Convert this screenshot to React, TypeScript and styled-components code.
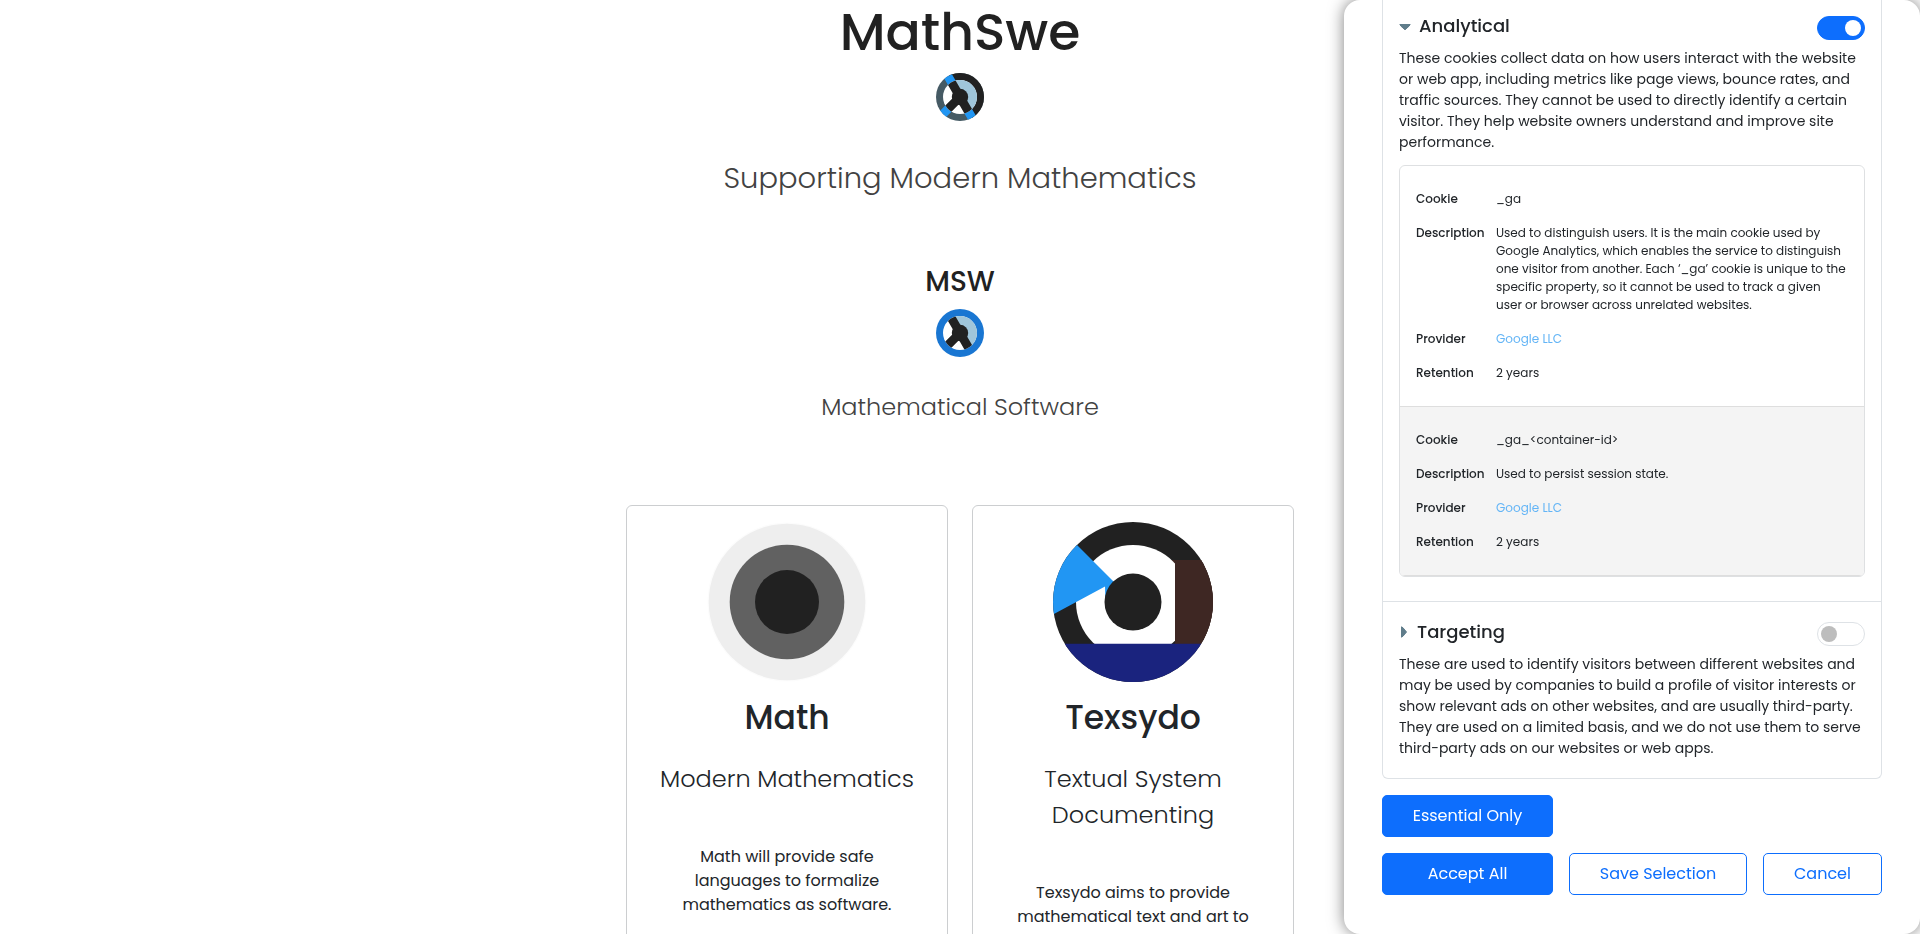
import React, { useId, useState } from "react";
import styled, { createGlobalStyle, css } from "styled-components";

const GlobalStyle = createGlobalStyle`
  *, *::before, *::after { box-sizing: border-box; }
  html, body { margin: 0; }
  body {
    overflow: hidden;
    background: #fff;
    color: #212529;
    font: 400 16px/24px Poppins, Inter, sans-serif;
  }
  h1, h2, h3, p { margin: 0; font-weight: 400; }
`;

const Page = styled.main`
  display: flex;
  flex-direction: column;
  align-items: center;
  height: 100vh;
  overflow: hidden;
  text-align: center;
`;

const Hero = styled.header<{ $small?: boolean }>`
  display: flex;
  flex-direction: column;
  align-items: center;
  color: #212121;
  margin-top: ${(p) => (p.$small ? 64 : 0)}px;

  svg { margin-top: 9px; }
`;

const HeroTitle = styled.h1<{ $small?: boolean }>`
  font-size: ${(p) => (p.$small ? 28 : 52)}px;
  line-height: ${(p) => (p.$small ? 36 : 64)}px;
  font-weight: 500;
`;

const HeroSubtitle = styled.h2<{ $small?: boolean }>`
  margin-top: ${(p) => (p.$small ? 32 : 35)}px;
  font-size: ${(p) => (p.$small ? 24 : 29)}px;
  line-height: ${(p) => (p.$small ? 36 : 44)}px;
  font-weight: 300;
  color: #424242;
`;

const Cards = styled.section`
  display: grid;
  grid-template-columns: 1fr 1fr;
  gap: 24px;
  width: 100%;
  max-width: 668px;
  margin-top: 80px;
  flex: 1 0 auto;
`;

const Card = styled.article`
  display: flex;
  flex-direction: column;
  align-items: center;
  min-height: 480px;
  padding: 16px;
  border: 1px solid #ccced0;
  border-radius: 6px;
`;

const CardTitle = styled.h2`
  margin-top: 16px;
  font-size: 33px;
  line-height: 39px;
  font-weight: 500;
`;

const CardSubtitle = styled.h3`
  margin-top: 24px;
  font-size: 24px;
  line-height: 36px;
  font-weight: 300;
  white-space: pre-line;
`;

const CardText = styled.p`
  margin-top: 48px;
  white-space: pre-line;
`;

const Drawer = styled.aside`
  position: fixed;
  inset: 0 0 0 auto;
  width: 30%;
  min-width: 576px;
  padding: 0 38px 39px;
  overflow: hidden;
  background: #fff;
  border-radius: 16px;
  box-shadow: 0 0 16px rgba(0, 0, 0, 0.5);
`;

const Categories = styled.div`
  border: 1px solid #dee2e6;
  border-top: 0;
  border-radius: 0 0 6px 6px;
`;

const Category = styled.section`
  padding: 16px 16px 19px;

  & + & {
    padding-top: 20px;
    border-top: 1px solid #dee2e6;
  }
`;

const CategoryHead = styled.div`
  display: flex;
  justify-content: space-between;
  align-items: flex-start;
  height: 32px;
`;

const Disclosure = styled.button`
  display: flex;
  align-items: center;
  gap: 8px;
  padding: 0;
  border: 0;
  background: none;
  color: inherit;
  font: 500 18px/20px Poppins, Inter, sans-serif;
  cursor: pointer;
`;

const Switch = styled.input`
  appearance: none;
  flex: none;
  display: flex;
  align-items: center;
  width: 48px;
  height: 24px;
  margin: 0;
  padding: 0 3px;
  border: 1px solid #dee2e6;
  border-radius: 12px;
  background: #fff;
  cursor: pointer;

  &::before {
    content: "";
    width: 16px;
    height: 16px;
    border-radius: 50%;
    background: #bdbdbd;
  }

  &:checked {
    justify-content: flex-end;
    border-color: #0d6efd;
    background: #0d6efd;
  }
  &:checked::before { background: #fff; }
`;

const CategoryText = styled.p`
  font-size: 14px;
  line-height: 21px;
  white-space: pre-line;
`;

const CookieList = styled.div`
  margin: 12px 0 5px;
  border: 1px solid #dee0e2;
  border-radius: 6px;
  overflow: hidden;
`;

const Cookie = styled.div`
  padding: 16px;
  border-bottom: 1px solid #dedede;

  &:nth-child(even) { background: #f4f4f4; }
`;

const CookieTable = styled.table`
  width: 100%;
  border-collapse: collapse;
  font-size: 12px;
  line-height: 18px;
  text-align: left;

  th, td {
    padding: 8px 0;
    vertical-align: top;
    white-space: pre-line;
  }
  th { width: 80px; font-weight: 500; }
  a { color: #64b5f6; text-decoration: none; }
`;

const Actions = styled.div`
  display: grid;
  grid-template-columns: 171fr 178fr 119fr;
  gap: 16px;
  margin-top: 16px;
`;

const Button = styled.button<{ $solid?: boolean; $first?: boolean }>`
  height: 42px;
  padding: 0;
  border: 1px solid #0d6efd;
  border-radius: 5px;
  background: #fff;
  color: #0d6efd;
  font: 400 16px/24px Poppins, Inter, sans-serif;
  cursor: pointer;

  ${(p) => p.$solid && css`background: #0d6efd; color: #fff;`}
  ${(p) => p.$first && css`grid-column: 1;`}
`;

function WheelLogo({ solidRing = false }: { solidRing?: boolean }) {
  const id = useId();
  const spokes = "M24 24 9 -2M24 24 -1 49M24 24 39 50";
  return (
    <svg width="48" height="48" viewBox="0 0 48 48" aria-hidden="true">
      <clipPath id={`${id}o`}><circle cx="24" cy="24" r="24" /></clipPath>
      <clipPath id={`${id}i`}><circle cx="24" cy="24" r="17" /></clipPath>
      {solidRing ? (
        <circle cx="24" cy="24" r="24" fill="#1976d2" />
      ) : (
        <g clipPath={`url(#${id}o)`}>
          <path fill="#455a64" d="M0 0h48v48H0z" />
          <path fill="#212121" d="M9 -2H50V50H39z" />
          <path d={spokes} stroke="#2196f3" strokeWidth="8.8" />
        </g>
      )}
      <g clipPath={`url(#${id}i)`}>
        <path fill="#fff" d="M0 0h48v48H0z" />
        <path fill="#9fc5da" d="M9 -2H50V50H39z" />
        <path d={spokes} stroke="#212121" strokeWidth="8.8" />
        <circle cx="24" cy="24" r="8.2" fill="#212121" />
      </g>
    </svg>
  );
}

function MathLogo() {
  return (
    <svg width="160" height="160" viewBox="0 0 160 160" aria-hidden="true">
      <circle cx="80" cy="80" r="79.5" fill="#fcfcfc" />
      <circle cx="80" cy="80" r="78.3" fill="#eee" />
      <circle cx="80" cy="80" r="57.3" fill="#616161" />
      <circle cx="80" cy="80" r="32" fill="#212121" />
    </svg>
  );
}

function TexsydoLogo() {
  return (
    <svg width="160" height="160" viewBox="0 0 160 160" aria-hidden="true">
      <clipPath id="texsydo-disc"><circle cx="80" cy="80" r="80" /></clipPath>
      <clipPath id="texsydo-bowl"><path d="M0 0h122v160H0z" /></clipPath>
      <g clipPath="url(#texsydo-disc)">
        <path fill="#212121" d="M0 0h160v160H0z" />
        <path fill="#3e2723" d="M118 38h42v80h-42z" />
        <circle cx="80" cy="80" r="57" fill="#fff" clipPath="url(#texsydo-bowl)" />
        <path fill="#3e2723" d="M122 38h38v84h-38z" />
        <path fill="#2196f3" d="M0-1 62 61 56 80 52.3 74 52 64.6-10 98z" />
        <path fill="#1a237e" d="M0 121.7h160V160H0z" />
        <circle cx="80" cy="80" r="28.5" fill="#212121" />
      </g>
    </svg>
  );
}

function Caret({ open }: { open: boolean }) {
  return (
    <svg width={open ? 12 : 10} height="14" viewBox={open ? "0 0 12 14" : "0 0 10 14"} aria-hidden="true">
      <path
        fill="#607d8b"
        stroke="#607d8b"
        strokeLinejoin="round"
        d={open ? "M.8 5.5h10.4L10 7.2 6 10.8 2 7.2z" : "M2.5 1.8 4 2.8 7.5 7 4 11.2 2.5 12.2z"}
      />
    </svg>
  );
}

interface CookieInfo {
  name: string;
  description: string;
}

const analyticalCookies: CookieInfo[] = [
  {
    name: "_ga",
    description:
      "Used to distinguish users. It is the main cookie used by\nGoogle Analytics, which enables the service to distinguish\none visitor from another. Each ‘_ga’ cookie is unique to the\nspecific property, so it cannot be used to track a given\nuser or browser across unrelated websites.",
  },
  { name: "_ga_<container-id>", description: "Used to persist session state." },
];

interface CategoryProps {
  title: string;
  text: string;
  enabled: boolean;
  cookies?: CookieInfo[];
}

function CookieCategory({ title, text, enabled, cookies }: CategoryProps) {
  const [open, setOpen] = useState(Boolean(cookies));
  const [checked, setChecked] = useState(enabled);
  return (
    <Category>
      <CategoryHead>
        <Disclosure type="button" aria-expanded={open} onClick={() => setOpen(!open)}>
          <Caret open={open} />
          {title}
        </Disclosure>
        <Switch
          type="checkbox"
          role="switch"
          aria-label={title}
          checked={checked}
          onChange={(e) => setChecked(e.target.checked)}
        />
      </CategoryHead>
      <CategoryText>{text}</CategoryText>
      {open && cookies && (
        <CookieList>
          {cookies.map((cookie) => (
            <Cookie key={cookie.name}>
              <CookieTable>
                <tbody>
                  <tr><th scope="row">Cookie</th><td>{cookie.name}</td></tr>
                  <tr><th scope="row">Description</th><td>{cookie.description}</td></tr>
                  <tr><th scope="row">Provider</th><td><a href="#google">Google LLC</a></td></tr>
                  <tr><th scope="row">Retention</th><td>2 years</td></tr>
                </tbody>
              </CookieTable>
            </Cookie>
          ))}
        </CookieList>
      )}
    </Category>
  );
}

export default function App() {
  return (
    <>
      <GlobalStyle />
      <Page>
        <Hero>
          <HeroTitle>MathSwe</HeroTitle>
          <WheelLogo />
          <HeroSubtitle>Supporting Modern Mathematics</HeroSubtitle>
        </Hero>
        <Hero $small>
          <HeroTitle as="h2" $small>MSW</HeroTitle>
          <WheelLogo solidRing />
          <HeroSubtitle as="h3" $small>Mathematical Software</HeroSubtitle>
        </Hero>
        <Cards>
          <Card>
            <MathLogo />
            <CardTitle>Math</CardTitle>
            <CardSubtitle>Modern Mathematics</CardSubtitle>
            <CardText>{"Math will provide safe\nlanguages to formalize\nmathematics as software."}</CardText>
          </Card>
          <Card>
            <TexsydoLogo />
            <CardTitle>Texsydo</CardTitle>
            <CardSubtitle>{"Textual System\nDocumenting"}</CardSubtitle>
            <CardText>{"Texsydo aims to provide\nmathematical text and art to"}</CardText>
          </Card>
        </Cards>
      </Page>
      <Drawer aria-label="Cookie preferences">
        <Categories>
          <CookieCategory
            title="Analytical"
            enabled
            cookies={analyticalCookies}
            text={"These cookies collect data on how users interact with the website\nor web app, including metrics like page views, bounce rates, and\ntraffic sources. They cannot be used to directly identify a certain\nvisitor. They help website owners understand and improve site\nperformance."}
          />
          <CookieCategory
            title="Targeting"
            enabled={false}
            text={"These are used to identify visitors between different websites and\nmay be used by companies to build a profile of visitor interests or\nshow relevant ads on other websites, and are usually third-party.\nThey are used on a limited basis, and we do not use them to serve\nthird-party ads on our websites or web apps."}
          />
        </Categories>
        <Actions>
          <Button type="button" $solid $first>Essential Only</Button>
          <Button type="button" $solid $first>Accept All</Button>
          <Button type="button">Save Selection</Button>
          <Button type="button">Cancel</Button>
        </Actions>
      </Drawer>
    </>
  );
}
